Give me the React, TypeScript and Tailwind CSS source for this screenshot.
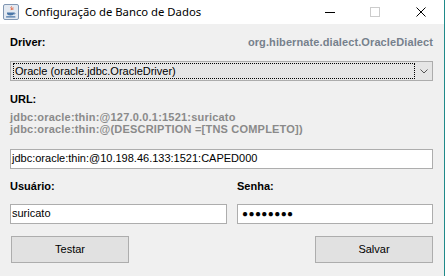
const font = { fontFamily: '"Liberation Sans", Arial, sans-serif' }

function JavaIcon() {
  return (
    <svg width="16" height="16" viewBox="0 0 16 16" className="shrink-0">
      <rect x="0.5" y="0.5" width="15" height="15" rx="1.5" fill="#e3e9f1" stroke="#8197b3" />
      <path d="M8.5 2.5c-1.5 1.2 1 2 -0.5 3.6M10 3.5c-1 0.8 0.6 1.3 -0.4 2.4" stroke="#e4572e" strokeWidth="1" fill="none" />
      <path d="M4 8.5h7v0.8c0 1.4-1.4 2.2-3.5 2.2S4 10.7 4 9.3z" fill="#4b77a8" />
      <path d="M11 8.8c1.3 0 1.3 1.4 0 1.4" stroke="#4b77a8" strokeWidth="0.9" fill="none" />
      <rect x="3" y="12.3" width="9.5" height="1.2" rx="0.6" fill="#4b77a8" />
    </svg>
  )
}

function TitleBar() {
  return (
    <div className="flex h-[24px] shrink-0 items-center bg-white">
      <div className="ml-[3px]">
        <JavaIcon />
      </div>
      <span
        className="ml-[6px] text-[11.3px] leading-none text-black"
        style={{ fontFamily: '"Noto Sans", "Open Sans", sans-serif' }}
      >
        Configuração de Banco de Dados
      </span>
      <div className="ml-auto flex items-center">
        <span className="mr-[35px] block h-px w-[10px] bg-black" />
        <span className="mr-[36px] block h-[10px] w-[10px] border border-[#cccccc]" />
        <svg width="10" height="10" viewBox="0 0 10 10" className="mr-[18px]">
          <path d="M0.5 0.5L9.5 9.5M9.5 0.5L0.5 9.5" stroke="#000" strokeWidth="1" />
        </svg>
      </div>
    </div>
  )
}

function Field({ children, className = '' }: { children?: React.ReactNode; className?: string }) {
  return (
    <div
      className={`flex h-[20px] items-center border border-[#adadad] bg-white pl-[1px] text-[11px] text-black ${className}`}
    >
      {children}
    </div>
  )
}

function Button({ label }: { label: string }) {
  return (
    <div className="flex h-[27px] w-[118px] items-center justify-center border border-[#adadad] bg-[#e1e1e1] text-[11px] text-black">
      {label}
    </div>
  )
}

export default function App() {
  return (
    <div className="flex h-[276px] w-[445px] flex-col border-r border-[#1f8a8a] bg-[#f0f0f0]" style={font}>
      <TitleBar />
      <div className="flex flex-1 flex-col pl-[10px] pr-[11px] pt-[12px]">
        <div className="flex items-center justify-between text-[11px] font-bold leading-[13px]">
          <span className="text-black">Driver:</span>
          <span className="tracking-[0.1px] text-[#76808c]">org.hibernate.dialect.OracleDialect</span>
        </div>

        <div className="mt-[12px] flex h-[20px] items-stretch border border-[#acacac] bg-[#e5e5e5]">
          <div className="my-[1px] ml-[2px] flex flex-1 items-center border border-dotted border-black pl-[1px] text-[11px] leading-none text-black">
            Oracle (oracle.jdbc.OracleDriver)
          </div>
          <div className="flex w-[17px] items-center justify-center">
            {/* combo arrow */}
            <svg width="8" height="5" viewBox="0 0 8 5">
              <path d="M0.5 0.5L4 4L7.5 0.5" stroke="#555555" strokeWidth="1" fill="none" />
            </svg>
          </div>
        </div>

        <div className="mt-[12px] text-[11px] font-bold leading-[13px] text-black">URL:</div>
        <div className="mt-[5px] text-[11px] font-bold leading-[12.3px] tracking-[0.2px] text-[#8a8a8a]">
          <div>jdbc:oracle:thin:@127.0.0.1:1521:suricato</div>
          <div className="whitespace-nowrap">jdbc:oracle:thin:@(DESCRIPTION =[TNS COMPLETO])</div>
        </div>

        <Field className="mt-[13px]">jdbc:oracle:thin:@10.198.46.133:1521:CAPED000</Field>

        <div className="mt-[11px] grid grid-cols-[217px_1fr] gap-x-[10px] text-[11px] font-bold leading-[13px] text-black">
          <span>Usuário:</span>
          <span>Senha:</span>
        </div>

        <div className="mt-[11px] grid grid-cols-[217px_1fr] gap-x-[10px]">
          <Field>suricato</Field>
          <Field>
            <span className="ml-[3px] text-[10px] leading-none tracking-[0.4px]">●●●●●●●●</span>
          </Field>
        </div>

        <div className="mt-[12px] flex justify-between pl-[1px]">
          <Button label="Testar" />
          <Button label="Salvar" />
        </div>
      </div>
    </div>
  )
}
